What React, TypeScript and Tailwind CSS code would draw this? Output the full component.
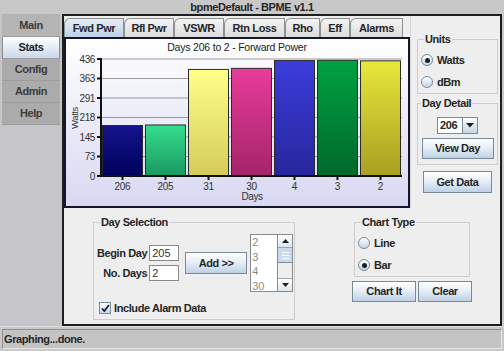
import React from 'react'

const bold = "font-bold text-[11px] tracking-[-0.4px] text-[#262626]"

const bars = [
  { day: '206', v: 190, top: '#14148e', bot: '#00005a' },
  { day: '205', v: 192, top: '#36de8e', bot: '#1a9660' },
  { day: '31', v: 399, top: '#ffff8a', bot: '#d4cc58' },
  { day: '30', v: 403, top: '#e83c9c', bot: '#a42468' },
  { day: '4', v: 432, top: '#3c3cdc', bot: '#26269c' },
  { day: '3', v: 433, top: '#00a242', bot: '#00682a' },
  { day: '2', v: 431, top: '#e8e83c', bot: '#a89e22' },
]

const ticks = [0, 73, 145, 218, 291, 363, 436]
const tabs = [
  { label: 'Fwd Pwr', w: 'w-[60px]', on: true },
  { label: 'Rfl Pwr', w: 'w-[50px]' },
  { label: 'VSWR', w: 'w-[50px]' },
  { label: 'Rtn Loss', w: 'w-[61px]' },
  { label: 'Rho', w: 'w-[35px]' },
  { label: 'Eff', w: 'w-[30px]' },
  { label: 'Alarms', w: 'w-[53px]' },
]

function Chart() {
  const x0 = 35
  const y0 = 137
  const h = 117
  const max = 436
  return (
    <svg width="342" height="167" className="block">
      <defs>
        {bars.map((b, i) => (
          <linearGradient key={i} id={`bar${i}`} x1="0" y1="0" x2="0" y2="1">
            <stop offset="0" stopColor={b.top} />
            <stop offset="1" stopColor={b.bot} />
          </linearGradient>
        ))}
      </defs>
      <text x="171" y="12" textAnchor="middle" fontSize="10.5" letterSpacing="-0.2" fill="#222">
        Days 206 to 2 - Forward Power
      </text>
      {ticks.map((t, i) => {
        const y = y0 - i * 19.5
        return (
          <g key={t}>
            {i > 0 && <line x1={x0} x2="336" y1={y} y2={y} stroke="#9a9a9a" strokeWidth="1" />}
            <line x1="31" x2={x0} y1={y} y2={y} stroke="#111" strokeWidth="2" />
            <text x="29" y={y + 3.5} textAnchor="end" fontSize="10" letterSpacing="-0.4" fill="#333">
              {t}
            </text>
          </g>
        )
      })}
      {bars.map((b, i) => {
        const bh = (b.v / max) * h
        const x = x0 + i * 43 + 1
        return (
          <g key={b.day}>
            <rect x={x + 0.5} y={y0 - bh + 0.5} width="40" height={bh} fill={`url(#bar${i})`} stroke="#2a2a2a" strokeWidth="1" />
            <line x1={x + 20.5} x2={x + 20.5} y1={y0} y2={y0 + 4} stroke="#111" strokeWidth="2" />
            <text x={x + 20.5} y="151" textAnchor="middle" fontSize="10" letterSpacing="-0.3" fill="#333">
              {b.day}
            </text>
          </g>
        )
      })}
      <line x1={x0} x2={x0} y1="19" y2={y0 + 1} stroke="#111" strokeWidth="2" />
      <line x1={x0 - 1} x2="336" y1={y0} y2={y0} stroke="#111" strokeWidth="2" />
      <text x="186" y="161" textAnchor="middle" fontSize="10" letterSpacing="-0.4" fill="#333">
        Days
      </text>
      <text x="11.5" y="79" textAnchor="middle" fontSize="9.5" letterSpacing="-0.4" fill="#333" transform="rotate(-90 11.5 79)">
        Watts
      </text>
    </svg>
  )
}

function Btn({ label, className }: { label: string; className: string }) {
  return (
    <button className={`flex items-center justify-center border border-[#7a8a99] bg-linear-to-b from-white via-[#e4ecf5] to-[#bed1e6] ${bold} ${className}`}>
      {label}
    </button>
  )
}

function Radio({ label, checked }: { label: string; checked?: boolean }) {
  return (
    <div className="flex items-center h-[12px]">
      <span className="flex items-center justify-center w-[12px] h-[12px] rounded-full border border-[#7a8a99] bg-linear-to-b from-white to-[#c4d5e8]">
        {checked && <span className="w-[5px] h-[5px] rounded-full bg-[#1e1e1e]" />}
      </span>
      <span className={`ml-[4px] ${bold}`}>{label}</span>
    </div>
  )
}

function Group({ title, className, children }: { title: string; className: string; children: React.ReactNode }) {
  return (
    <fieldset className={`border border-[#cdcdcd] ${className}`}>
      <legend className={`ml-[3px] px-[1px] leading-[12px] ${bold}`}>{title}</legend>
      {children}
    </fieldset>
  )
}

function NavBtn({ label, h, on }: { label: string; h: string; on?: boolean }) {
  return (
    <div
      className={`${h} flex items-center justify-center border-b border-[#9c9c9c] ${
        on ? 'bg-linear-to-b from-white to-[#c9d9eb] border-x border-x-[#8c8c8c] text-[#222]' : 'bg-[#ababab] text-[#3c3c3c]'
      } font-bold text-[11px] tracking-[-0.4px]`}
    >
      {label}
    </div>
  )
}

export default function App() {
  return (
    <div className="w-[504px] h-[351px] bg-[#c8c8c8] flex flex-col overflow-hidden font-['Liberation_Sans',Arial,sans-serif]">
      <div className={`h-[14px] flex items-center justify-center ${bold}`}>bpmeDefault - BPME v1.1</div>

      <div className="flex h-[312px]">
        <nav className="w-[62px] flex flex-col px-[2px] bg-[#c6c6ca]">
          <div className="h-[23px] flex items-center justify-center bg-[#b4b4b4] border-b border-[#9c9c9c] font-bold text-[11px] tracking-[-0.4px] text-[#3c3c3c]">
            Main
          </div>
          <NavBtn label="Stats" h="h-[22px]" on />
          <NavBtn label="Config" h="h-[22px]" />
          <NavBtn label="Admin" h="h-[22px]" />
          <NavBtn label="Help" h="h-[22px]" />
        </nav>

        <div className="w-[440px] border-2 border-[#1e1e1e] bg-[#eeeeee] flex flex-col">
          <div className="flex h-[192px]">
            <div className="w-[346px] flex flex-col">
              <div className="h-[21px] flex items-end">
                {tabs.map((t) => (
                  <div
                    key={t.label}
                    className={`${t.w} h-[19px] flex items-center justify-center border border-b-0 border-[#8e8f8f] rounded-tl-[6px] ${
                      t.on ? 'bg-linear-to-b from-[#e6eef7] to-[#bcd2e8]' : 'bg-linear-to-b from-[#f4f4f4] to-[#dcdcdc]'
                    } ${bold}`}
                  >
                    {t.label}
                  </div>
                ))}
              </div>
              <div className="h-[171px] border-2 border-[#16162a] bg-linear-to-b from-white to-[#d8d8f2]">
                <Chart />
              </div>
            </div>

            <div className="flex-1 flex flex-col pl-[6px] pr-[2px] border-l border-[#d6d6d6]">
              <Group title="Units" className="mt-[17px] pl-[3px] pt-[9px] pb-[5px]">
                <Radio label="Watts" checked />
                <div className="mt-[10px]">
                  <Radio label="dBm" />
                </div>
              </Group>
              <Group title="Day Detail" className="mt-[3px] pt-[8px] pb-[5px] flex flex-col items-center">
                <div className="flex h-[17px] w-[41px] border border-[#7a8a99] bg-white">
                  <div className={`flex-1 flex items-center pl-[2px] ${bold}`}>206</div>
                  <div className="w-[15px] flex items-center justify-center border-l border-[#7a8a99] bg-linear-to-b from-white to-[#c4d5e8]">
                    <svg width="8" height="5" viewBox="0 0 8 5">
                      <path d="M0 0 L8 0 L4 4.5 Z" fill="#1e1e1e" />
                    </svg>
                  </div>
                </div>
                <Btn label="View Day" className="mt-[4px] w-[72px] h-[21px]" />
              </Group>
              <Btn label="Get Data" className="mt-[6px] mx-auto w-[69px] h-[22px]" />
            </div>
          </div>

          <div className="flex-1 flex items-start">
            <Group title="Day Selection" className="ml-[29px] mt-[8px] w-[202px] h-[104px] pl-[3px]">
              <div className="mt-[6px] flex items-center h-[58px]">
                <div className="grid grid-cols-[auto_30px] gap-x-[2px] gap-y-[4px] items-center">
                  <span className={`text-right ${bold}`}>Begin Day</span>
                  <div className="h-[16px] border border-[#8a8a8a] bg-white pl-[2px] text-[11px] leading-[14px] text-[#333]">205</div>
                  <span className={`text-right ${bold}`}>No. Days</span>
                  <div className="h-[16px] border border-[#8a8a8a] bg-white pl-[2px] text-[11px] leading-[14px] text-[#333]">2</div>
                </div>
                <Btn label="Add >>" className="ml-[6px] w-[62px] h-[22px]" />
                <div className="ml-[3px] flex w-[43px] h-[58px] border border-[#8a8a8a]">
                  <div className="flex-1 bg-white overflow-hidden pl-[1px] text-[11px] leading-[14.6px] text-[#8a8a8a]">
                    <div>2</div>
                    <div>3</div>
                    <div>4</div>
                    <div>30</div>
                  </div>
                  <div className="w-[15px] flex flex-col border-l border-[#8a8a8a] bg-[#eeeeee]">
                    <div className="h-[13px] flex items-center justify-center border-b border-[#9aa8b6] bg-linear-to-b from-white to-[#dbe5f0]">
                      <svg width="7" height="4" viewBox="0 0 7 4">
                        <path d="M0 4 L7 4 L3.5 0 Z" fill="#1e1e1e" />
                      </svg>
                    </div>
                    <div className="h-[15px] flex flex-col items-center justify-center gap-[2px] border-b border-[#7a8a99] bg-[#c9daee]">
                      <span className="w-[7px] h-px bg-white" />
                      <span className="w-[7px] h-px bg-white" />
                      <span className="w-[7px] h-px bg-white" />
                    </div>
                    <div className="flex-1" />
                    <div className="h-[13px] flex items-center justify-center border-t border-[#9aa8b6] bg-linear-to-b from-white to-[#dbe5f0]">
                      <svg width="7" height="4" viewBox="0 0 7 4">
                        <path d="M0 0 L7 0 L3.5 4 Z" fill="#1e1e1e" />
                      </svg>
                    </div>
                  </div>
                </div>
              </div>
              <div className="mt-[10px] ml-[2px] flex items-center h-[12px]">
                <span className="w-[12px] h-[12px] border border-[#7a8a99] bg-linear-to-b from-white to-[#c4d5e8] flex items-center justify-center">
                  <svg width="9" height="8" viewBox="0 0 9 8">
                    <path d="M1 4.5 L3.3 7 L8 1" stroke="#1c1c3c" strokeWidth="1.8" fill="none" />
                  </svg>
                </span>
                <span className={`ml-[3px] ${bold}`}>Include Alarm Data</span>
              </div>
            </Group>

            <div className="ml-[57px] w-[120px] flex flex-col">
              <Group title="Chart Type" className="ml-[2px] mt-[8px] w-[116px] h-[61px] pl-[3px] pt-[9px]">
                <Radio label="Line" />
                <div className="mt-[10px]">
                  <Radio label="Bar" checked />
                </div>
              </Group>
              <div className="mt-[4px] flex">
                <Btn label="Chart It" className="w-[64px] h-[21px]" />
                <Btn label="Clear" className="ml-[2px] w-[54px] h-[21px]" />
              </div>
            </div>
          </div>
        </div>
      </div>

      <div className="h-[25px] pt-[2px] px-[2px] border-t border-[#dedede]">
        <div className="h-[20px] flex items-center pl-px border border-t-[#8f8f8f] border-l-[#8f8f8f] border-b-[#e6e6e6] border-r-[#e6e6e6] bg-[#c4c4c4]">
          <span className={bold}>Graphing...done.</span>
        </div>
      </div>
    </div>
  )
}
